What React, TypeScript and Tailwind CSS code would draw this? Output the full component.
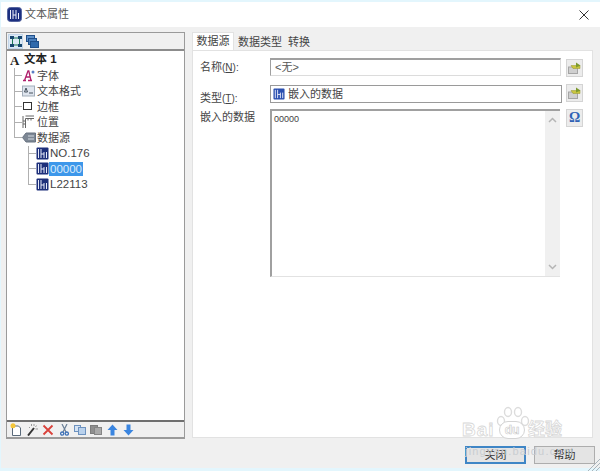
const FONT = "font-['Liberation_Sans','Noto_Sans_CJK_SC',sans-serif]";

function DataIcon({ className = "", light = false }: { className?: string; light?: boolean }) {
  return (
    <svg width="13" height="13" viewBox="0 0 13 13" className={`shrink-0 ${className}`}>
      <rect x="0.5" y="0.5" width="12" height="12" rx="1" fill={light ? "#2a4fb0" : "#1d2f7a"} />
      <path d="M2.5 2v9M5 2v9M8 5v6M10.5 5v6M5 7h3" stroke="#e8ecfa" strokeWidth="1" fill="none" />
    </svg>
  );
}

function FontIcon() {
  return (
    <svg width="13" height="13" viewBox="0 0 13 13">
      <path d="M1 11.5h3M6 11.5h4M2.5 11.5L6 2h.8L9 11.5M3.7 8h4" stroke="#b01f6b" strokeWidth="1.3" fill="none" />
      <circle cx="11" cy="3" r="1.5" fill="#5b7fc4" />
    </svg>
  );
}
function FormatIcon() {
  return (
    <svg width="13" height="12" viewBox="0 0 13 12">
      <rect x="0.5" y="1" width="12" height="10" fill="#dfe5ee" stroke="#a2adb9" />
      <path d="M4 3L2.5 7h3zM7 8h4" stroke="#45505c" fill="none" />
    </svg>
  );
}
function BorderIcon() {
  return (
    <svg width="13" height="13" viewBox="0 0 13 13">
      <rect x="1.5" y="2.5" width="8" height="7" fill="#fff" stroke="#333" />
    </svg>
  );
}
function PosIcon() {
  return (
    <svg width="13" height="14" viewBox="0 0 13 14">
      <path d="M3.5 13V3.5H12M1 1v12M3.5 1H12M6 3.5v2M9 3.5v2M1 6h2.5M1 9h2.5" stroke="#666" fill="none" />
    </svg>
  );
}
function SourceIcon() {
  return (
    <svg width="14" height="11" viewBox="0 0 14 11">
      <path d="M4 1h9.5v9H4L.5 5.5z" fill="#7d8794" stroke="#687280" />
      <path d="M6 4h6M6 7h6" stroke="#d6dbe2" />
    </svg>
  );
}

function TreeRow({ icon, label, selected = false, latin = false }: { icon: React.ReactNode; label: string; selected?: boolean; latin?: boolean }) {
  return (
    <div className="flex h-[15.5px] items-center">
      <span className="w-[7px] shrink-0 border-t border-[#b0b0b0]" />
      <span className={`flex shrink-0 justify-start ${latin ? "w-[13px]" : "w-[14px]"}`}>{icon}</span>
      <span className={`px-[1px] leading-[14px] ${latin ? "text-[11.5px]" : "text-[11px]"} ${selected ? "bg-[#3d97ea] text-[#dcecfb]" : "text-[#444]"}`}>{label}</span>
    </div>
  );
}

function Tree() {
  return (
    <div className="flex-1 bg-white pt-[1px]">
      <div className="flex h-[16px] items-center pl-[3px] text-[11.5px] font-bold text-[#222]">
        <span className="w-[14px] font-['Liberation_Serif'] text-[13px] leading-none">A</span>
        <span>文本 1</span>
      </div>
      <div className="ml-[7px] h-[70px] border-l border-[#b0b0b0]">
        <TreeRow icon={<FontIcon />} label="字体" />
        <TreeRow icon={<FormatIcon />} label="文本格式" />
        <TreeRow icon={<BorderIcon />} label="边框" />
        <TreeRow icon={<PosIcon />} label="位置" />
        <TreeRow icon={<SourceIcon />} label="数据源" />
      </div>
      <div className="ml-[21px] mt-[7.5px] h-[39px] border-l border-[#b0b0b0]">
        <TreeRow latin icon={<DataIcon />} label="NO.176" />
        <TreeRow latin icon={<DataIcon />} label="00000" selected />
        <TreeRow latin icon={<DataIcon />} label="L22113" />
      </div>
    </div>
  );
}

function TopTools() {
  return (
    <div className="flex h-[18px] items-center gap-[3px] border-b-2 border-[#8c8c8c] bg-[#f0f0f0] pl-[1px]">
      <span className="flex h-[15px] w-[15px] items-center justify-center border border-[#c3d6ea] bg-[#dce9f5]">
        <svg width="12" height="11" viewBox="0 0 12 11">
          <path d="M2.5 2h7v7h-7z" fill="none" stroke="#1b7a52" />
          <g fill="#17466f">
            <rect x="0" y="0" width="4" height="3" />
            <rect x="8" y="0" width="4" height="3" />
            <rect x="0" y="8" width="4" height="3" />
            <rect x="8" y="8" width="4" height="3" />
          </g>
        </svg>
      </span>
      <svg width="13" height="13" viewBox="0 0 13 13">
        <rect x="0.5" y="0.5" width="8" height="6" fill="#5d8fc8" stroke="#1f4f8a" />
        <rect x="2.5" y="3.5" width="8" height="6" fill="#4a7fbc" stroke="#1f4f8a" />
        <rect x="4.5" y="6.5" width="8" height="6" fill="#2f69ab" stroke="#1f4f8a" />
      </svg>
    </div>
  );
}

function BottomTools() {
  const wrap = "flex w-[16px] h-[15px] items-center justify-center";
  return (
    <div className="flex h-[17px] items-center border-t-2 border-[#6f6f6f] bg-[#f0f0f0] pl-[1px]">
      <span className={wrap}>
        <svg width="12" height="13" viewBox="0 0 12 13">
          <path d="M2.5 3h6l2 2v7.5h-8z" fill="#fff" stroke="#5a6a7a" />
          <circle cx="3" cy="2.8" r="2.5" fill="#f4c63a" />
        </svg>
      </span>
      <span className={wrap}>
        <svg width="12" height="12" viewBox="0 0 12 12">
          <path d="M2 11.5L8 4" stroke="#333" strokeWidth="2" />
          <path d="M8 0v2M10.5 1.5L9.5 3M12 5H9.5M3 3l1 1M5.5 0v2" stroke="#999" />
        </svg>
      </span>
      <span className={wrap}>
        <svg width="12" height="12" viewBox="0 0 12 12">
          <path d="M1.5 1.5l9 9M10.5 1.5l-9 9" stroke="#d9413a" strokeWidth="1.8" />
        </svg>
      </span>
      <span className={wrap}>
        <svg width="9" height="12" viewBox="0 0 9 12">
          <path d="M2 0l4 8M7 0L3 8" stroke="#6a7f96" strokeWidth="1.2" />
          <circle cx="2.2" cy="9.6" r="1.6" fill="none" stroke="#3f72b8" strokeWidth="1.3" />
          <circle cx="6.8" cy="9.6" r="1.6" fill="none" stroke="#3f72b8" strokeWidth="1.3" />
        </svg>
      </span>
      <span className={wrap}>
        <svg width="12" height="10" viewBox="0 0 12 10">
          <rect x="0.5" y="0.5" width="6" height="6" fill="#d5e3f3" stroke="#6d92bf" />
          <rect x="4.5" y="2.5" width="7" height="7" fill="#b9d1ec" stroke="#6d92bf" />
        </svg>
      </span>
      <span className={wrap}>
        <svg width="12" height="10" viewBox="0 0 12 10">
          <rect x="0.5" y="0.5" width="7" height="8" fill="#8f8f8f" stroke="#7d7d7d" />
          <rect x="4.5" y="2.5" width="7" height="7" fill="#a9a9a9" stroke="#858585" />
        </svg>
      </span>
      <span className={wrap}>
        <svg width="11" height="12" viewBox="0 0 11 12">
          <path d="M5.5 0.5L10.5 6H7.5V11.5H3.5V6H0.5z" fill="#3a85e0" />
        </svg>
      </span>
      <span className={wrap}>
        <svg width="11" height="12" viewBox="0 0 11 12">
          <path d="M5.5 11.5L10.5 6H7.5V0.5H3.5V6H0.5z" fill="#3a85e0" />
        </svg>
      </span>
    </div>
  );
}

function SideButton({ omega = false }: { omega?: boolean }) {
  return (
    <div className="flex h-[18px] w-[17px] items-center justify-center border border-[#d4d4d4] bg-[#ececec]">
      {omega ? (
        <span className="font-['Liberation_Serif'] text-[14px] font-bold leading-none text-[#2f62b5]">Ω</span>
      ) : (
        <svg width="13" height="12" viewBox="0 0 13 12">
          <rect x="0.5" y="5" width="9" height="6.5" fill="#cfcfcf" stroke="#a5a5a5" />
          <path d="M3 3.5h9v3H5z" fill="#c9c63e" stroke="#96952f" strokeWidth="0.5" />
          <path d="M8 .5l4.5 3L8 5.5z" fill="#7d9a2e" />
        </svg>
      )}
    </div>
  );
}

function Label({ children, className = "" }: { children: React.ReactNode; className?: string }) {
  return <div className={`w-[77px] shrink-0 pl-[7px] text-[11px] leading-[16px] text-[#444] ${className}`}>{children}</div>;
}

function Watermark() {
  return (
    <div className="pointer-events-none absolute left-0 top-0 h-full w-full">
      <svg width="34" height="24" viewBox="0 0 34 24" className="absolute left-[496px] top-[406px]">
        <g fill="#fff" stroke="#dcdcdc" strokeWidth="1.4">
          <ellipse cx="5" cy="15" rx="3.5" ry="4.5" />
          <ellipse cx="12" cy="6" rx="3.5" ry="4.5" />
          <ellipse cx="22" cy="6" rx="3.5" ry="4.5" />
          <ellipse cx="29" cy="15" rx="3.5" ry="4.5" />
        </g>
      </svg>
      <div className="absolute left-[462px] top-[420px] flex h-[20px] items-center text-white [-webkit-text-stroke:0.8px_#d8d8d8]">
        <span className="w-[37px] text-[19px] font-bold leading-[20px] tracking-[1px]">Bai</span>
        <span className="flex h-[18px] w-[26px] items-center justify-center rounded-full border border-[#d4d4d4] bg-white text-[12px] font-bold [-webkit-text-stroke:0.6px_#c8c8c8]">du</span>
        <span className="ml-[3px] text-[17px] font-bold leading-[20px]">经验</span>
      </div>
      <div className="absolute left-[465px] top-[444px] text-[11px] leading-[14px] tracking-[1.2px] text-[#c9cdd1]">jingyan.baidu.com</div>
      <svg width="14" height="13" viewBox="0 0 14 13" className="absolute left-[586px] top-[458px]">
        <path d="M2 13L14 1M6 13L14 5M10 13l4-4" stroke="#a9b4bb" strokeWidth="1" fill="none" />
      </svg>
    </div>
  );
}

export default function App() {
  return (
    <div className={`relative flex h-[471px] w-[600px] flex-col overflow-hidden bg-[#e3f6fd] pb-[3px] pl-[1px] pt-[2px] ${FONT}`}>
      <div className="flex flex-1 flex-col bg-[#f0f0f0]">
        <div className="flex h-[25px] items-center bg-white pl-[6px] pr-[11px]">
          <svg width="15" height="15" viewBox="0 0 15 15">
            <rect x="0.5" y="0.5" width="14" height="14" rx="3" fill="#1c2f80" stroke="#55649f" />
            <path d="M3.5 3v9M6 3v9M9 3v9M11.5 6v6M6 8h3" stroke="#eef1fb" fill="none" />
          </svg>
          <span className="ml-[3px] text-[11px] text-[#555]">文本属性</span>
          <svg width="10" height="10" viewBox="0 0 10 10" className="ml-auto">
            <path d="M.5.5l9 9M9.5.5l-9 9" stroke="#333" strokeWidth="1" />
          </svg>
        </div>
        <div className="flex flex-1 pl-[5px] pr-[7px] pt-[5px]">
          <div className="flex h-[407px] w-[179px] shrink-0 flex-col border border-b-2 border-[#9a9a9a]">
            <TopTools />
            <Tree />
            <BottomTools />
          </div>
          <div className="ml-[7px] flex h-[406px] flex-1 flex-col">
            <div className="flex h-[18px] items-end text-[11px] text-[#444]">
              <div className="flex h-[18px] items-center border-x border-t border-[#e2e2e2] bg-white px-[3.5px]">数据源</div>
              <div className="flex h-[16px] items-center pl-[4px] pr-[2px]">数据类型</div>
              <div className="flex h-[16px] items-center pl-[4px]">转换</div>
            </div>
            <div className="flex flex-1 flex-col border border-[#e2e2e2] bg-white pt-[7px]">
              <div className="flex h-[20px] items-start">
                <Label className="pt-px">名称<span className="text-[10px]">(<u>N</u>):</span></Label>
                <div className="flex h-[18px] w-[291px] items-center border border-[#dcdcdc] border-l-[#a0a0a0] border-t-2 border-t-[#a0a0a0] pl-[4px] text-[11px] text-[#555]">&lt;无&gt;</div>
                <div className="ml-[5px] mt-px"><SideButton /></div>
              </div>
              <div className="mt-[7px] flex h-[20px] items-start">
                <Label className="pt-[5px]">类型<span className="text-[10px]">(<u>T</u>):</span></Label>
                <div className="flex h-[18px] w-[292px] items-center gap-[3px] border border-[#9a9a9a] pl-[2px] text-[11px] text-[#444]">
                  <DataIcon light className="h-[12px] w-[12px]" />
                  <span>嵌入的数据</span>
                </div>
                <div className="-mt-px ml-[4px]"><SideButton /></div>
              </div>
              <div className="mt-[4px] flex items-start">
                <Label>嵌入的数据</Label>
                <div className="flex h-[168px] w-[290px] border-b border-l-2 border-t-2 border-[#a0a0a0] border-b-[#e2e2e2]">
                  <div className="flex-1 pl-[2px] pt-[1px] text-[9px] leading-[14px] text-[#444]">00000</div>
                  <div className="flex w-[15px] flex-col items-center justify-between bg-[#f0f0f0] py-[6px]">
                    <svg width="9" height="6" viewBox="0 0 9 6"><path d="M1 5l3.5-3.5L8 5" stroke="#b5b5b5" strokeWidth="1.5" fill="none" /></svg>
                    <svg width="9" height="6" viewBox="0 0 9 6"><path d="M1 1l3.5 3.5L8 1" stroke="#b5b5b5" strokeWidth="1.5" fill="none" /></svg>
                  </div>
                </div>
                <div className="ml-[6px]"><SideButton omega /></div>
              </div>
            </div>
          </div>
        </div>
        <div className="flex h-[26px] items-start justify-end gap-[8px] pr-[5px] pt-[4px]">
          <div className="flex h-[18px] w-[61px] items-center justify-center border-2 border-[#3f86c6] bg-[#e4e4e4] text-[11px] text-[#333]">关闭</div>
          <div className="flex h-[18px] w-[61px] items-center justify-center border border-[#adadad] bg-[#e4e4e4] text-[11px] text-[#333]">帮助</div>
        </div>
      </div>
      <Watermark />
    </div>
  );
}
